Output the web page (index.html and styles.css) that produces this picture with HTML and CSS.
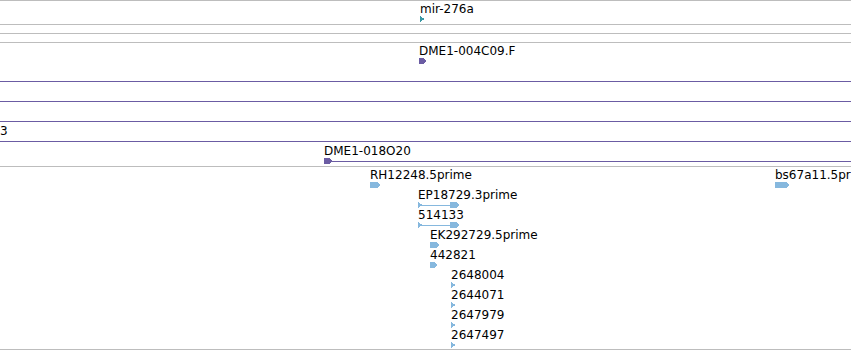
FILE: index.html
```html
<!DOCTYPE html>
<html>
<head>
<meta charset="utf-8">
<link rel="stylesheet" href="styles.css">
</head>
<body>
<div class="panel">
  <div class="track t-top">
    <div class="row">
      <div class="feat" style="left:420px">
        <span class="label">mir-276a</span>
        <svg class="glyph teal" width="6" height="6"><polygon points="0,0 5,3 0,6"/></svg>
      </div>
    </div>
  </div>
  <div class="track t-empty"></div>
  <div class="track t-empty"></div>
  <div class="track t-mid">
    <div class="row">
      <div class="feat" style="left:419px">
        <span class="label">DME1-004C09.F</span>
        <svg class="glyph purple" width="8" height="6"><polygon points="0,0 4,0 7,3 4,6 0,6"/></svg>
      </div>
    </div>
    <div class="row"><div class="feat span"><span class="label"></span><div class="line purple-bg"></div></div></div>
    <div class="row"><div class="feat span"><span class="label"></span><div class="line purple-bg"></div></div></div>
    <div class="row"><div class="feat span"><span class="label"></span><div class="line purple-bg"></div></div></div>
    <div class="row"><div class="feat span"><span class="label">3</span><div class="line purple-bg"></div></div></div>
    <div class="row">
      <div class="feat span" style="left:324px">
        <span class="label">DME1-018O20</span>
        <div class="glyph-row">
          <svg class="glyph purple" width="9" height="6"><polygon points="0,0 5,0 8,3 5,6 0,6"/></svg>
          <div class="line purple-bg grow"></div>
        </div>
      </div>
    </div>
  </div>
  <div class="track t-est">
    <div class="row">
      <div class="feat" style="left:370px">
        <span class="label">RH12248.5prime</span>
        <svg class="glyph blue" width="11" height="6"><polygon points="0,0 7,0 10,3 7,6 0,6"/></svg>
      </div>
      <div class="feat" style="left:775px">
        <span class="label">bs67a11.5prime</span>
        <svg class="glyph blue" width="15" height="6"><polygon points="0,0 11,0 14,3 11,6 0,6"/></svg>
      </div>
    </div>
    <div class="row">
      <div class="feat" style="left:418px">
        <span class="label">EP18729.3prime</span>
        <svg class="glyph blue" width="42" height="6"><polygon points="0,0 5,3 0,6"/><rect x="4" y="3" width="29" height="1"/><polygon points="32,0 38,0 41,3 38,6 32,6"/></svg>
      </div>
    </div>
    <div class="row">
      <div class="feat" style="left:418px">
        <span class="label">514133</span>
        <svg class="glyph blue" width="42" height="6"><polygon points="0,0 5,3 0,6"/><rect x="4" y="3" width="29" height="1"/><polygon points="32,0 38,0 41,3 38,6 32,6"/></svg>
      </div>
    </div>
    <div class="row">
      <div class="feat" style="left:430px">
        <span class="label">EK292729.5prime</span>
        <svg class="glyph blue" width="10" height="6"><polygon points="0,0 6,0 9,3 6,6 0,6"/></svg>
      </div>
    </div>
    <div class="row">
      <div class="feat" style="left:430px">
        <span class="label">442821</span>
        <svg class="glyph blue" width="8" height="6"><polygon points="0,0 4,0 7,3 4,6 0,6"/></svg>
      </div>
    </div>
    <div class="row">
      <div class="feat" style="left:451px">
        <span class="label">2648004</span>
        <svg class="glyph blue" width="6" height="6"><polygon points="0,0 5,3 0,6"/></svg>
      </div>
    </div>
    <div class="row">
      <div class="feat" style="left:451px">
        <span class="label">2644071</span>
        <svg class="glyph blue" width="6" height="6"><polygon points="0,0 5,3 0,6"/></svg>
      </div>
    </div>
    <div class="row">
      <div class="feat" style="left:451px">
        <span class="label">2647979</span>
        <svg class="glyph blue" width="6" height="6"><polygon points="0,0 5,3 0,6"/></svg>
      </div>
    </div>
    <div class="row">
      <div class="feat" style="left:451px">
        <span class="label">2647497</span>
        <svg class="glyph blue" width="6" height="6"><polygon points="0,0 5,3 0,6"/></svg>
      </div>
    </div>
  </div>
</div>
</body>
</html>
```

FILE: styles.css
```css
html, body {
  margin: 0;
  padding: 0;
  background: #ffffff;
  overflow: hidden;
}
body {
  width: 851px;
  height: 350px;
  font-family: "DejaVu Sans", "Liberation Sans", sans-serif;
  font-size: 12px;
  color: #000000;
}
.panel {
  width: 851px;
  overflow: hidden;
}
.track {
  border-top: 1px solid #bdbdbd;
  position: relative;
}
.t-top {
  padding: 1px 0 2px;
}
.t-empty {
  height: 8px;
}
.t-mid {
  padding: 1px 0 2px;
}
.t-est {
  padding: 1px 0 1px;
  border-bottom: 1px solid #bdbdbd;
}
.row {
  position: relative;
  height: 20px;
}
.feat {
  position: absolute;
  top: 0;
  display: flex;
  flex-direction: column;
  align-items: flex-start;
  white-space: nowrap;
}
.feat.span {
  left: 0;
  right: 0;
  align-items: stretch;
}
.label {
  display: block;
  height: 14px;
  line-height: 14px;
}
.glyph {
  display: block;
  shape-rendering: crispEdges;
}
.glyph-row {
  display: flex;
  height: 6px;
  align-items: flex-start;
}
.line {
  height: 1px;
  margin-top: 3px;
}
.grow {
  flex: 1;
  margin-left: -1px;
}
.teal { fill: #3b98a4; }
.purple { fill: #6b5ca3; }
.blue { fill: #86b8de; }
.purple-bg { background: #6b5ca3; }
```
